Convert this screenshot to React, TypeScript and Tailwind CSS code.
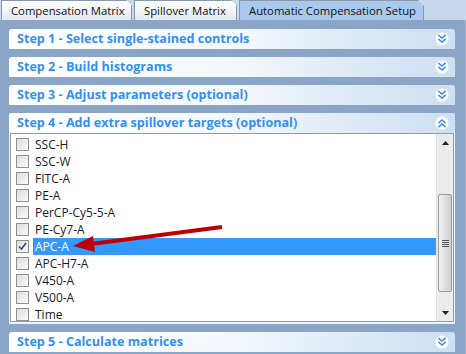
import React from "react";

// ============================================================================
// Automatic compensation setup panel (Windows 7 style accordion)
// ============================================================================

const FONT = { fontFamily: '"Open Sans", "Noto Sans", "DejaVu Sans", sans-serif' };

const channels = [
  "SSC-H",
  "SSC-W",
  "FITC-A",
  "PE-A",
  "PerCP-Cy5-5-A",
  "PE-Cy7-A",
  "APC-A",
  "APC-H7-A",
  "V450-A",
  "V500-A",
  "Time",
];

const ChevronBadge = ({ up = false }: { up?: boolean }) => (
  <svg width="16" height="16" viewBox="0 0 16 16">
    <circle cx="8" cy="8" r="7" fill="#ffffff" stroke="#d6e2f0" strokeWidth="1" />
    <g
      fill="none"
      stroke="#3a8ef0"
      strokeWidth="1.6"
      strokeLinecap="square"
      transform={up ? "rotate(180 8 8)" : undefined}
    >
      <polyline points="5,4.5 8,7 11,4.5" />
      <polyline points="5,8.5 8,11 11,8.5" />
    </g>
  </svg>
);

const StepHeader = ({ label, up = false }: { label: string; up?: boolean }) => (
  <div className="flex h-5 items-center justify-between rounded-t-[3px] bg-gradient-to-r from-white via-[#f4f8fc] to-[#cddff2] pl-2 pr-[5px]">
    <span className="text-[12.6px] font-bold leading-none text-[#3390f4]" style={FONT}>
      {label}
    </span>
    <ChevronBadge up={up} />
  </div>
);

const Checkbox = ({ checked }: { checked: boolean }) => (
  <div className="flex h-[13px] w-[13px] shrink-0 items-center justify-center border border-[#8e8f8f] bg-gradient-to-br from-[#dcdcdc] to-[#fbfbfb]">
    {checked && (
      <svg width="9" height="9" viewBox="0 0 9 9">
        <polyline points="1,4.5 3.5,7 8,1" fill="none" stroke="#3a4c7a" strokeWidth="1.6" />
      </svg>
    )}
  </div>
);

const Tab = ({ label, active = false, w }: { label: string; active?: boolean; w: string }) => (
  <div
    className={`relative flex h-5 shrink-0 items-center whitespace-nowrap border border-b-0 border-[#8798ad] pl-[9px] pt-px text-[11.3px] leading-none text-[#111] ${w} ${
      active ? "bg-[#a9c9ee]" : "bg-gradient-to-b from-white to-[#e4e8ee]"
    }`}
    style={FONT}
  >
    {label}
    <div className="absolute -right-px -top-px h-[6px] w-[6px] bg-[#c7d8ec] [clip-path:polygon(0_0,100%_0,100%_100%)]" />
  </div>
);

const Scrollbar = () => (
  <div className="flex w-[17px] shrink-0 flex-col border-l border-[#e0e0e0] bg-[#ececec]">
    <div className="flex h-[17px] items-center justify-center">
      <svg width="7" height="4" viewBox="0 0 7 4">
        <polygon points="0,4 3.5,0 7,4" fill="#222" />
      </svg>
    </div>
    <div className="h-[43px]" />
    <div className="mx-[1px] flex h-[98px] items-center justify-center rounded-[2px] border border-[#9a9a9a] bg-gradient-to-r from-[#f2f2f2] to-[#cfcfcf]">
      <div className="flex flex-col gap-[1px]">
        <div className="h-px w-[7px] bg-[#555]" />
        <div className="h-px w-[7px] bg-[#555]" />
        <div className="h-px w-[7px] bg-[#555]" />
        <div className="h-px w-[7px] bg-[#555]" />
      </div>
    </div>
    <div className="flex-1" />
    <div className="flex h-[17px] items-center justify-center">
      <svg width="7" height="4" viewBox="0 0 7 4">
        <polygon points="0,0 3.5,4 7,0" fill="#222" />
      </svg>
    </div>
  </div>
);

export default function App() {
  return (
    <div className="flex h-[354px] w-[466px] flex-col overflow-hidden bg-[#c7d8ec]">
      {/* Tabs */}
      <div className="flex h-5 shrink-0 items-end gap-[2px] pl-px">
        <Tab label="Compensation Matrix" w="w-[131px]" />
        <Tab label="Spillover Matrix" w="w-[103px]" />
        <Tab label="Automatic Compensation Setup" w="w-[185px]" active />
      </div>

      {/* Accordion body */}
      <div className="flex flex-1 flex-col gap-2 border-r border-[#a3b8d0] bg-[#8aa5c5] pb-2 pl-[9px] pr-[10px] pt-[9px]">
        <StepHeader label="Step 1 - Select single-stained controls" />
        <StepHeader label="Step 2 - Build histograms" />
        <StepHeader label="Step 3 - Adjust parameters (optional)" />

        <div className="flex flex-col rounded-t-[3px] bg-[#eef3f9] pb-[2px]">
          <StepHeader label="Step 4 - Add extra spillover targets (optional)" up />
          <div className="relative mx-px flex h-[189px] border border-[#9a9a9a] bg-white">
            <div className="flex flex-1 flex-col pt-[2px]">
              {channels.map((c) => {
                const sel = c === "APC-A";
                return (
                  <div key={c} className="flex h-[17px] items-center pl-[5px]">
                    <Checkbox checked={sel} />
                    <div
                      className={`ml-1 flex h-full flex-1 items-center pl-[2px] text-[12px] ${
                        sel ? "bg-[#3399ff] text-white" : "text-[#1a1a2e]"
                      }`}
                      style={FONT}
                    >
                      {c}
                    </div>
                  </div>
                );
              })}
            </div>
            <Scrollbar />

            {/* Red annotation arrow */}
            <svg className="absolute left-0 top-0" width="240" height="140" viewBox="0 0 240 140">
              <line x1="211" y1="93" x2="80" y2="110" stroke="#c00000" strokeWidth="4" />
              <polygon points="62,112 82,102 84,118" fill="#c00000" />
            </svg>
          </div>
        </div>

        <StepHeader label="Step 5 - Calculate matrices" />
      </div>
    </div>
  );
}
